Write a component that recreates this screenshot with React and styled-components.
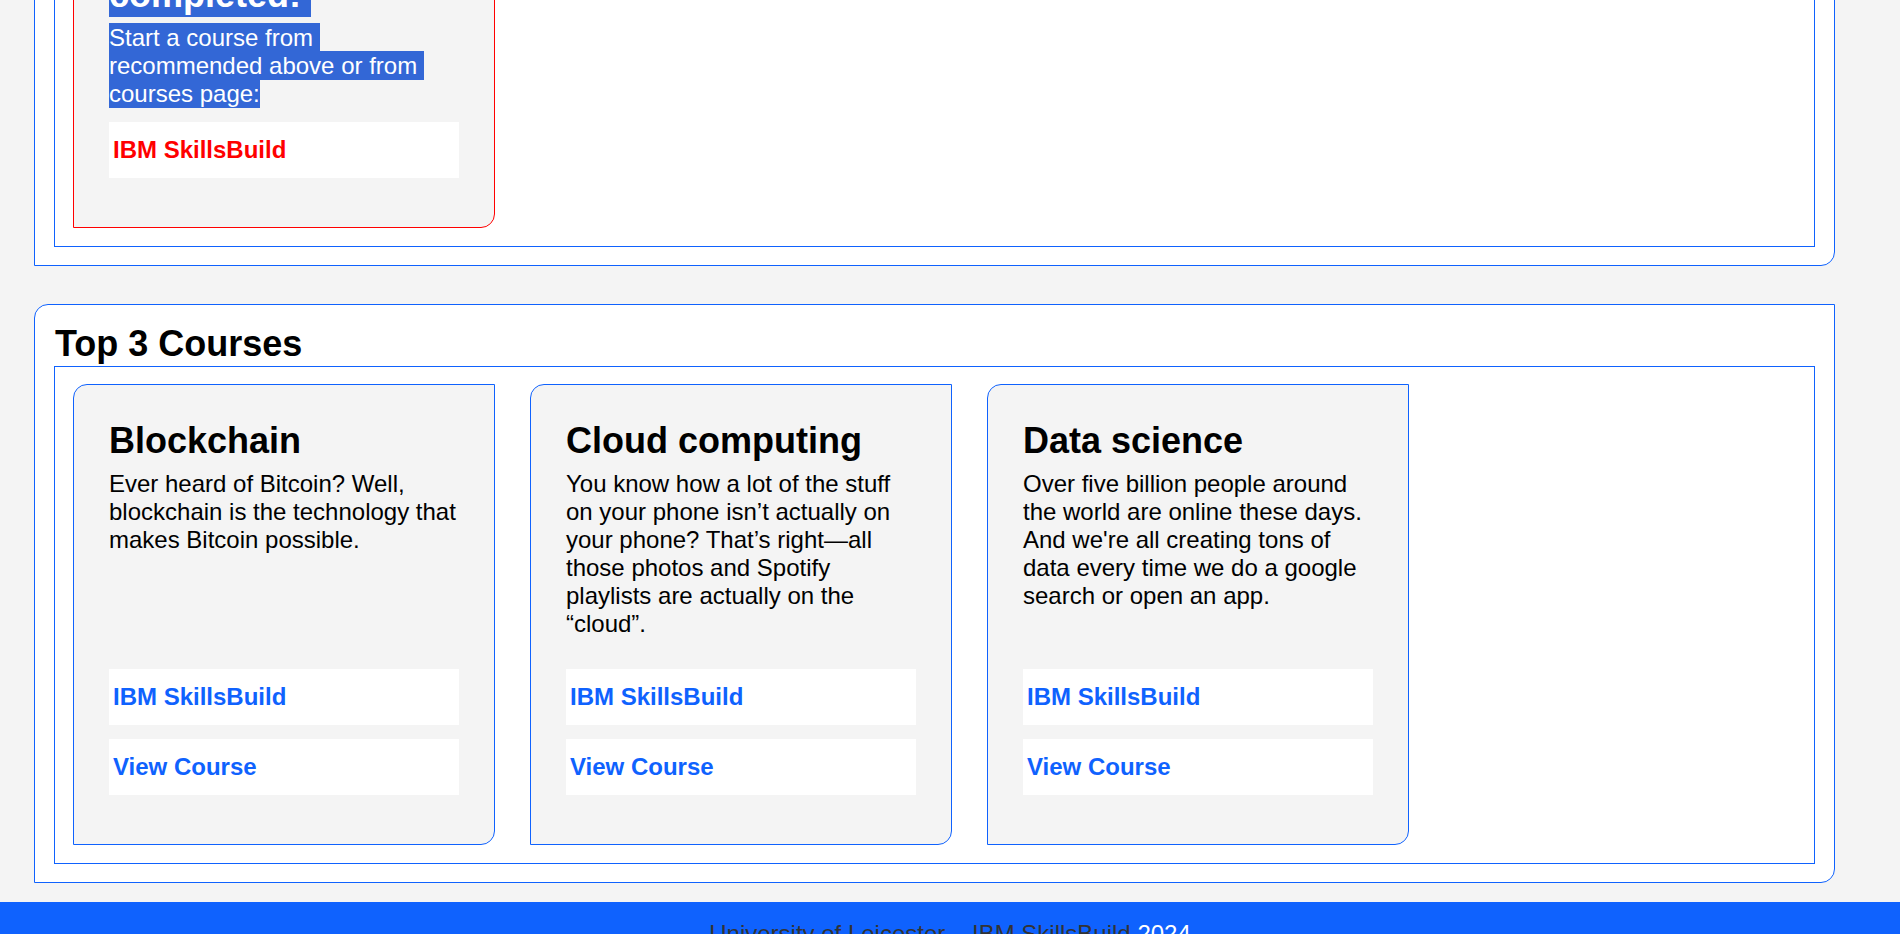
import React, { useLayoutEffect } from 'react';
import styled, { createGlobalStyle } from 'styled-components';

const BLUE = '#0f62fe';

const recommended = [
  {
    title: 'Artificial intelligence',
    text: 'Learn how machines can see, hear and understand the world around them.',
  },
  {
    title: 'Cybersecurity',
    text: 'Find out how organisations keep their data and their people safe online.',
  },
  {
    title: 'Design thinking',
    text: 'Put people first and solve real problems with a creative approach.',
  },
];

const topCourses = [
  {
    title: 'Blockchain',
    text: 'Ever heard of Bitcoin? Well, blockchain is the technology that makes Bitcoin possible.',
  },
  {
    title: 'Cloud computing',
    text: 'You know how a lot of the stuff on your phone isn\u2019t actually on your phone? That\u2019s right\u2014all those photos and Spotify playlists are actually on the \u201ccloud\u201d.',
  },
  {
    title: 'Data science',
    text: "Over five billion people around the world are online these days. And we're all creating tons of data every time we do a google search or open an app.",
  },
];

export default function App() {
  useLayoutEffect(() => {
    const toBottom = () =>
      window.scrollTo(0, document.documentElement.scrollHeight);
    toBottom();
    requestAnimationFrame(toBottom);
  }, []);

  const courseCard = (course, index) => (
    <Card key={index} $accent={BLUE} $minHeight='461px'>
      <CardTitle>{course.title}</CardTitle>
      <CardText>{course.text}</CardText>
      <LinkGroup>
        <CardLink href='#' $color={BLUE}>
          IBM SkillsBuild
        </CardLink>
        <CardLink href='#' $color={BLUE}>
          View Course
        </CardLink>
      </LinkGroup>
    </Card>
  );

  return (
    <>
      <GlobalStyle />
      <Header>
        <Brand>IBM SkillsBuild</Brand>
        <Nav>
          <a href='#'>Dashboard</a>
          <a href='#'>Courses</a>
          <a href='#'>Profile</a>
        </Nav>
      </Header>
      <Main>
        <Section>
          <SectionTitle>Welcome back</SectionTitle>
          <Panel $minHeight='300px'>
            <Intro>
              Track your progress, pick up where you left off and discover new
              courses on IBM SkillsBuild.
            </Intro>
          </Panel>
        </Section>

        <Section>
          <SectionTitle>Recommended Courses</SectionTitle>
          <Panel>{recommended.map(courseCard)}</Panel>
        </Section>

        <Section>
          <SectionTitle>Completed Courses</SectionTitle>
          <Panel>
            <Card $accent='#ff0000'>
              <CardTitle>
                <Highlight $pad='2px'>No courses completed:&nbsp;</Highlight>
              </CardTitle>
              <CardText>
                <Highlight $pad='1px'>
                  Start a course from&nbsp; recommended above or from&nbsp;
                  courses page:
                </Highlight>
              </CardText>
              <LinkGroup>
                <CardLink href='#' $color='#ff0000'>
                  IBM SkillsBuild
                </CardLink>
              </LinkGroup>
            </Card>
          </Panel>
        </Section>

        <Section>
          <SectionTitle>Top 3 Courses</SectionTitle>
          <Panel>{topCourses.map(courseCard)}</Panel>
        </Section>
      </Main>
      <Footer>
        University of Leicester &ndash; IBM SkillsBuild <Year>2024</Year>
      </Footer>
    </>
  );
}

const GlobalStyle = createGlobalStyle`
  *, *::before, *::after {
    box-sizing: border-box;
  }
  html, body {
    margin: 0;
    padding: 0;
    background: #f4f4f4;
    color: #000;
    font-family: "Liberation Sans", Arial, sans-serif;
  }
  html::-webkit-scrollbar {
    width: 18px;
    background: #f1f1f1;
  }
  html::-webkit-scrollbar-thumb {
    background: #c1c1c1;
    border-left: 2px solid #f1f1f1;
    border-top: 17px solid #f1f1f1;
    border-bottom: 17px solid #f1f1f1;
  }
`;

const Header = styled.header`
  height: 80px;
  background: ${BLUE};
  display: flex;
  align-items: center;
  justify-content: space-between;
  padding: 0 34px;
  color: #fff;
`;

const Brand = styled.div`
  font-size: 28px;
  font-weight: bold;
`;

const Nav = styled.nav`
  display: flex;
  gap: 32px;
  a {
    color: #fff;
    font-size: 20px;
    text-decoration: none;
  }
`;

const Main = styled.main`
  padding: 38px 0 0 34px;
`;

const Section = styled.section`
  width: 1801px;
  background: #fff;
  border: 1px solid ${BLUE};
  border-radius: 14px 0 14px 0;
  padding: 18px 19px 18px;
  & + & {
    margin-top: 38px;
  }
`;

const SectionTitle = styled.h2`
  margin: 0 0 2px;
  padding-left: 1px;
  font-size: 36px;
  line-height: 41px;
  font-weight: bold;
`;

const Panel = styled.div`
  display: flex;
  align-items: stretch;
  gap: 35px;
  min-height: ${(p) => p.$minHeight || 'auto'};
  border: 1px solid ${BLUE};
  padding: 17px 18px 18px;
`;

const Intro = styled.p`
  margin: 0;
  font-size: 24px;
  line-height: 28px;
`;

const Card = styled.div`
  width: 422px;
  min-height: ${(p) => p.$minHeight || 'auto'};
  display: flex;
  flex-direction: column;
  background: #f4f4f4;
  border: 1px solid ${(p) => p.$accent};
  border-radius: 14px 0 14px 0;
  padding: 35px 35px 35px;
`;

const CardTitle = styled.h3`
  margin: 0 0 9px;
  font-size: 36px;
  line-height: 41px;
  font-weight: bold;
`;

const CardText = styled.p`
  margin: 0 0 14px;
  font-size: 24px;
  line-height: 28px;
`;

const Highlight = styled.span`
  background: #3367d6;
  color: #fff;
  padding: ${(p) => p.$pad} 0;
  box-decoration-break: clone;
  -webkit-box-decoration-break: clone;
`;

const LinkGroup = styled.div`
  margin-top: auto;
  display: flex;
  flex-direction: column;
`;

const CardLink = styled.a`
  height: 56px;
  margin-bottom: 14px;
  display: flex;
  align-items: center;
  padding: 0 4px;
  background: #fff;
  color: ${(p) => p.$color};
  font-size: 24px;
  font-weight: bold;
  text-decoration: none;
`;

const Footer = styled.footer`
  margin-top: 19px;
  height: 32px;
  overflow: hidden;
  background: ${BLUE};
  padding-top: 18px;
  text-align: center;
  font-size: 24px;
  color: #333;
`;

const Year = styled.span`
  color: #fff;
`;
